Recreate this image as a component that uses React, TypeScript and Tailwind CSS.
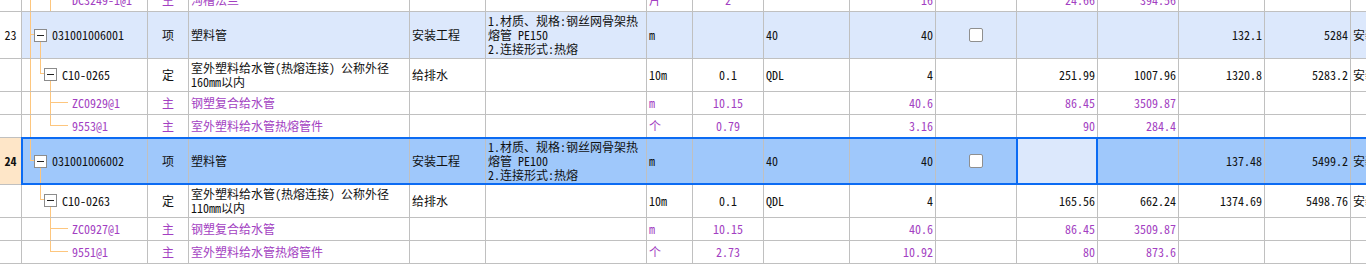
import React from "react";

type Cell = string | string[];
interface RowData {
  kind: "l0" | "l1" | "l2";
  cells: Cell[];
  purple?: boolean;
  topCont: boolean;
  last?: boolean;
  bg?: "r23" | "r24";
  bold?: boolean;
  checkbox?: boolean;
  selected?: boolean;
}

const W = [
  "w-[22px]",
  "w-[126px]",
  "w-[41px]",
  "w-[221px]",
  "w-[76px]",
  "w-[161px]",
  "w-[46px]",
  "w-[71px]",
  "w-[86px]",
  "w-[86px]",
  "w-[81px]",
  "w-[81px]",
  "w-[81px]",
  "w-[86px]",
  "w-[86px]",
  "w-[80px]",
];

const AL = [
  "justify-center",
  "",
  "justify-center",
  "justify-start pl-[2px]",
  "justify-start pl-[2px]",
  "justify-start pl-[2px]",
  "justify-start pl-[2px]",
  "justify-center",
  "justify-start pl-[2px]",
  "justify-end pr-[2px]",
  "justify-center",
  "justify-end pr-[2px]",
  "justify-end pr-[2px]",
  "justify-end pr-[2px]",
  "justify-end pr-[2px]",
  "justify-start pl-[2px]",
];

const H = { l0: "h-[47px]", l1: "h-[33px]", l2: "h-[23px]" };
const CH = { l0: 46, l1: 32, l2: 22 };
const PL = { l0: "pl-[30px]", l1: "pl-[40px]", l2: "pl-[50px]" };

const ORANGE = "#fdc67e";

function Tree({ kind, topCont, last }: { kind: "l0" | "l1" | "l2"; topCont: boolean; last?: boolean }) {
  const h = CH[kind];
  const ln = { stroke: ORANGE, strokeWidth: 1, shapeRendering: "crispEdges" as const };
  return (
    <svg width={125} height={h} className="absolute left-0 top-0" aria-hidden>
      {kind === "l0" && (
        <>
          <line x1={8.5} y1={0} x2={8.5} y2={topCont ? h : 22.5} {...ln} />
          <line x1={8.5} y1={22.5} x2={12} y2={22.5} {...ln} />
          <line x1={18.5} y1={30} x2={18.5} y2={h} {...ln} />
          <rect x={12.5} y={17.5} width={12} height={12} fill="#ffffff" stroke="#8c8c8c" shapeRendering="crispEdges" />
          <line x1={15} y1={23.5} x2={22} y2={23.5} stroke="#222" shapeRendering="crispEdges" />
        </>
      )}
      {kind === "l1" && (
        <>
          {topCont && <line x1={8.5} y1={0} x2={8.5} y2={h} {...ln} />}
          <line x1={18.5} y1={0} x2={18.5} y2={14.5} {...ln} />
          <line x1={18.5} y1={14.5} x2={22} y2={14.5} {...ln} />
          <line x1={28.5} y1={22} x2={28.5} y2={h} {...ln} />
          <rect x={22.5} y={9.5} width={12} height={12} fill="#ffffff" stroke="#8c8c8c" shapeRendering="crispEdges" />
          <line x1={25} y1={15.5} x2={32} y2={15.5} stroke="#222" shapeRendering="crispEdges" />
        </>
      )}
      {kind === "l2" && (
        <>
          {topCont && <line x1={8.5} y1={0} x2={8.5} y2={h} {...ln} />}
          <line x1={28.5} y1={0} x2={28.5} y2={last ? 10.5 : h} {...ln} />
          <line x1={28.5} y1={10.5} x2={46} y2={10.5} {...ln} />
        </>
      )}
    </svg>
  );
}

const rows: RowData[] = [
  {
    kind: "l2",
    purple: true,
    topCont: true,
    cells: ["", "DC3249-1@1", "主", "沟槽法兰", "", "", "片", "2", "", "16", "", "24.66", "394.56", "", "", ""],
  },
  {
    kind: "l0",
    topCont: true,
    bg: "r23",
    checkbox: true,
    cells: [
      "23",
      "031001006001",
      "项",
      "塑料管",
      "安装工程",
      ["1.材质、规格:钢丝网骨架热", "熔管 PE150", "2.连接形式:热熔"],
      "m",
      "",
      "40",
      "40",
      "",
      "",
      "",
      "132.1",
      "5284",
      "安装",
    ],
  },
  {
    kind: "l1",
    topCont: true,
    cells: [
      "",
      "C10-0265",
      "定",
      ["室外塑料给水管(热熔连接) 公称外径", "160mm以内"],
      "给排水",
      "",
      "10m",
      "0.1",
      "QDL",
      "4",
      "",
      "251.99",
      "1007.96",
      "1320.8",
      "5283.2",
      "安装",
    ],
  },
  {
    kind: "l2",
    purple: true,
    topCont: true,
    cells: ["", "ZC0929@1", "主", "钢塑复合给水管", "", "", "m", "10.15", "", "40.6", "", "86.45", "3509.87", "", "", ""],
  },
  {
    kind: "l2",
    purple: true,
    topCont: true,
    last: true,
    cells: ["", "9553@1", "主", "室外塑料给水管热熔管件", "", "", "个", "0.79", "", "3.16", "", "90", "284.4", "", "", ""],
  },
  {
    kind: "l0",
    topCont: false,
    bg: "r24",
    bold: true,
    checkbox: true,
    selected: true,
    cells: [
      "24",
      "031001006002",
      "项",
      "塑料管",
      "安装工程",
      ["1.材质、规格:钢丝网骨架热", "熔管 PE100", "2.连接形式:热熔"],
      "m",
      "",
      "40",
      "40",
      "",
      "",
      "",
      "137.48",
      "5499.2",
      "安装",
    ],
  },
  {
    kind: "l1",
    topCont: false,
    cells: [
      "",
      "C10-0263",
      "定",
      ["室外塑料给水管(热熔连接) 公称外径", "110mm以内"],
      "给排水",
      "",
      "10m",
      "0.1",
      "QDL",
      "4",
      "",
      "165.56",
      "662.24",
      "1374.69",
      "5498.76",
      "安装",
    ],
  },
  {
    kind: "l2",
    purple: true,
    topCont: false,
    cells: ["", "ZC0927@1", "主", "钢塑复合给水管", "", "", "m", "10.15", "", "40.6", "", "86.45", "3509.87", "", "", ""],
  },
  {
    kind: "l2",
    purple: true,
    topCont: false,
    last: true,
    cells: ["", "9551@1", "主", "室外塑料给水管热熔管件", "", "", "个", "2.73", "", "10.92", "", "80", "873.6", "", "", ""],
  },
];

function CellText({ v }: { v: Cell }) {
  if (Array.isArray(v)) {
    return (
      <div className="flex flex-col">
        {v.map((l, i) => (
          <span key={i} className="leading-[14px] whitespace-pre">
            {l}
          </span>
        ))}
      </div>
    );
  }
  return <span className="leading-[14px] whitespace-pre">{v}</span>;
}

function Row({ r }: { r: RowData }) {
  const rowBg = r.bg === "r23" ? "bg-[#dce8fc]" : r.bg === "r24" ? "bg-[#9fc8fb]" : "bg-white";
  const color = r.purple ? "text-[#a33fc2]" : "text-[#111111]";
  return (
    <div className={`relative flex ${H[r.kind]} ${color}`}>
      {r.cells.map((v, i) => {
        let bg = i === 0 ? (r.bold ? "bg-[#fee6c8]" : "bg-white") : rowBg;
        if (r.selected && i === 11) bg = "bg-[#dce8fc]";
        const base = `relative shrink-0 flex items-center overflow-hidden whitespace-nowrap border-r border-b border-[#c0c0c0] ${W[i]} ${bg}`;
        if (i === 1) {
          return (
            <div key={i} className={`${base} ${PL[r.kind]}`}>
              <Tree kind={r.kind} topCont={r.topCont} last={r.last} />
              <span className="relative leading-[14px]">{v as string}</span>
            </div>
          );
        }
        if (i === 10) {
          return (
            <div key={i} className={`${base} ${AL[i]}`}>
              {r.checkbox && <div className="w-[14px] h-[14px] bg-white border border-[#8f8f8f] rounded-[2px]" />}
            </div>
          );
        }
        return (
          <div key={i} className={`${base} ${AL[i]} ${i === 0 && r.bold ? "font-bold" : ""}`}>
            <CellText v={v} />
          </div>
        );
      })}
      {r.selected && (
        <>
          <div className="pointer-events-none absolute left-[21px] right-0 top-[-1px] h-[48px] border-2 border-[#0b6bf3]" />
          <div className="pointer-events-none absolute left-[1016px] w-[82px] top-[-1px] h-[48px] border-2 border-[#0b6bf3]" />
        </>
      )}
    </div>
  );
}

export default function App() {
  return (
    <div className="w-[1366px] h-[264px] overflow-hidden bg-white text-[12px] font-['Noto_Sans_Mono_CJK_SC','Noto_Sans_CJK_SC',sans-serif]">
      <div className="-mt-[11px] w-[1431px]">
        {rows.map((r, i) => (
          <Row key={i} r={r} />
        ))}
      </div>
    </div>
  );
}
